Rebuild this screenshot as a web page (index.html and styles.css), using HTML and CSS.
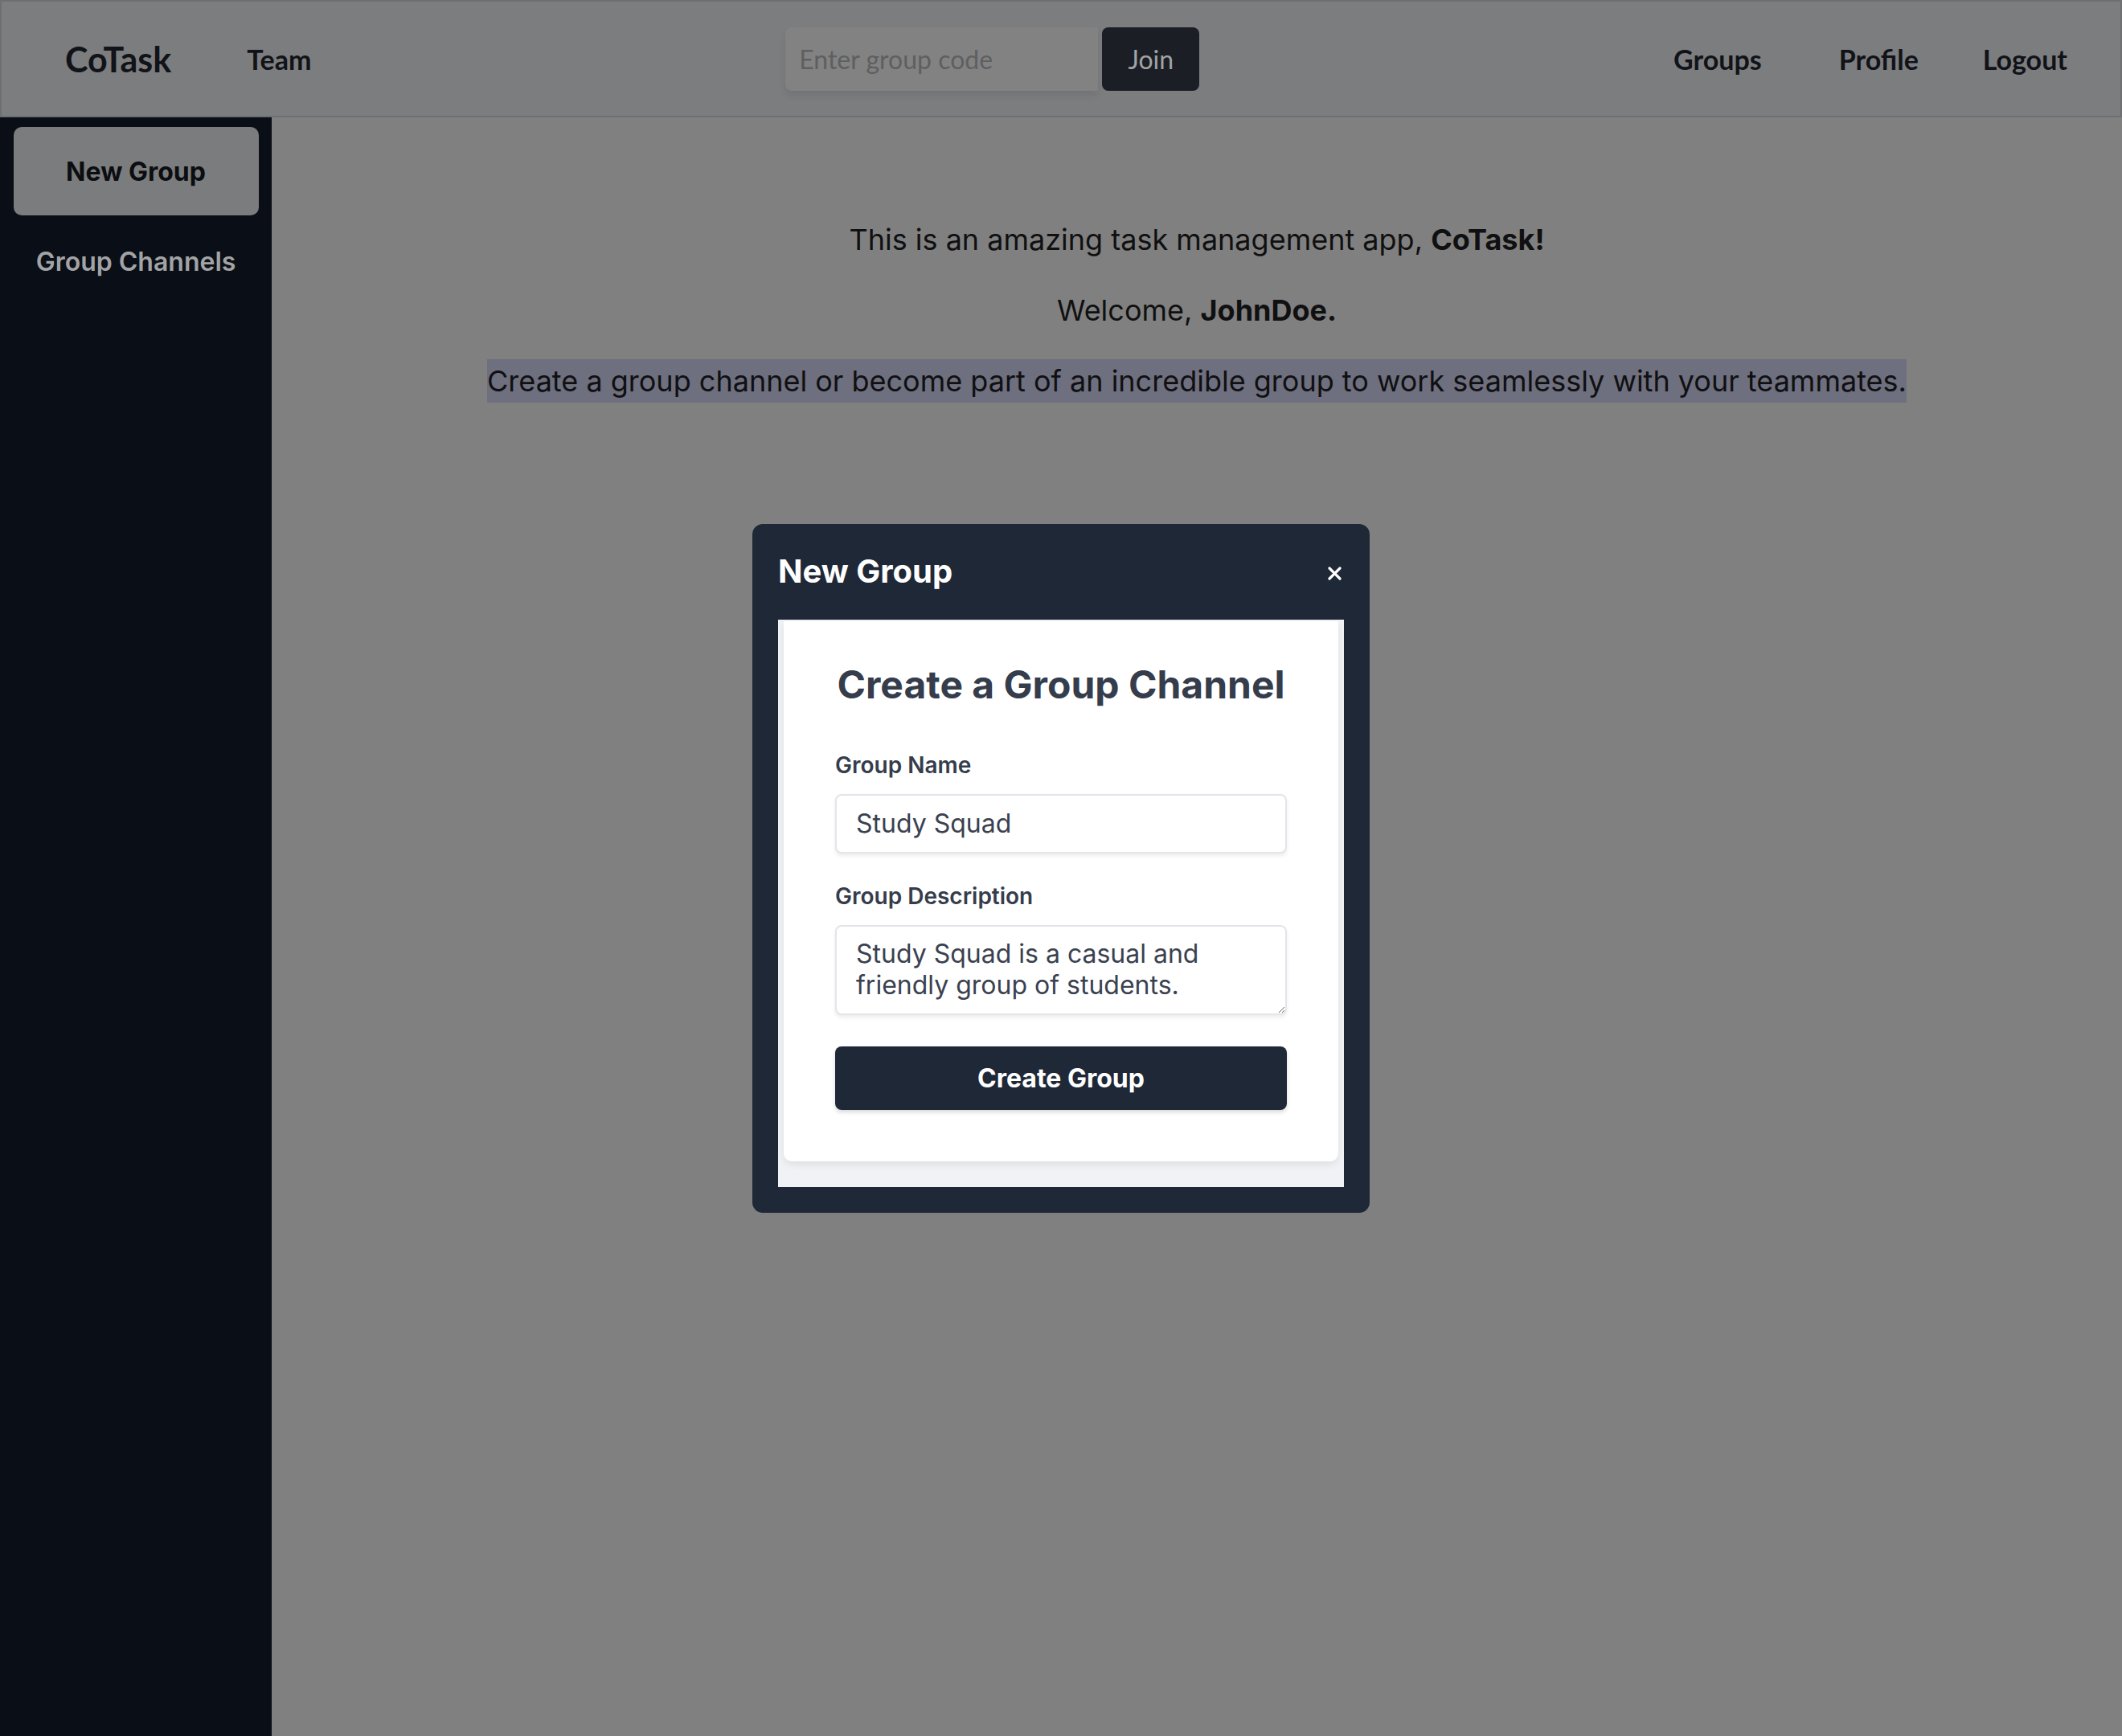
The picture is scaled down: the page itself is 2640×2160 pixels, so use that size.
FILE: index.html
```html
<!DOCTYPE html>
<html lang="en">
<head>
<meta charset="utf-8">
<title>CoTask</title>
<link rel="stylesheet" href="styles.css">
</head>
<body>
<header class="navbar">
  <div class="nav-left">
    <a class="brand" href="#">CoTask</a>
    <a class="nav-link" href="#">Team</a>
  </div>
  <form class="join-form">
    <input class="join-input" type="text" placeholder="Enter group code">
    <button class="join-btn" type="button">Join</button>
  </form>
  <nav class="nav-right">
    <a class="nav-link nav-groups" href="#">Groups</a>
    <a class="nav-link" href="#">Profile</a>
    <a class="nav-link" href="#">Logout</a>
  </nav>
</header>
<div class="layout">
  <aside class="sidebar">
    <button class="new-group-btn" type="button">New Group</button>
    <a class="side-link" href="#">Group Channels</a>
  </aside>
  <main class="main">
    <p class="intro">This is an amazing task management app, <strong>CoTask!</strong></p>
    <p class="intro">Welcome, <strong>JohnDoe.</strong></p>
    <p class="intro highlight">Create a group channel or become part of an incredible group to work seamlessly with your teammates.</p>
  </main>
</div>
<div class="modal-backdrop">
  <div class="modal">
    <div class="modal-header">
      <h2 class="modal-title">New Group</h2>
      <button class="close-btn" type="button" aria-label="Close">
        <svg width="17" height="17" viewBox="0 0 17 17"><path d="M2 2 L15 15 M15 2 L2 15" stroke="#ffffff" stroke-width="3.2" stroke-linecap="round"/></svg>
      </button>
    </div>
    <div class="modal-body">
      <form class="card">
        <h1 class="card-title">Create a Group Channel</h1>
        <label class="field-label" for="gname">Group Name</label>
        <input class="field-input" id="gname" type="text" value="Study Squad">
        <label class="field-label label-gap" for="gdesc">Group Description</label>
        <textarea class="field-textarea" id="gdesc">Study Squad is a casual and friendly group of students.</textarea>
        <button class="create-btn" type="button">Create Group</button>
      </form>
    </div>
  </div>
</div>
</body>
</html>
```

FILE: styles.css
```css
html, body {
  margin: 0;
  padding: 0;
}
body {
  width: 2640px;
  height: 2160px;
  overflow: hidden;
  background: #808080;
  font-family: Inter, "Noto Sans", sans-serif;
  color: #101011;
}
a {
  text-decoration: none;
  color: inherit;
}

/* navbar */
.navbar {
  box-sizing: border-box;
  height: 146px;
  display: flex;
  align-items: center;
  justify-content: space-between;
  padding: 0 66px 0 79px;
  background: #7c7d7f;
  border: 2px solid #6e6f71;
  font-family: Lato, "Open Sans", sans-serif;
  color: #111318;
}
.nav-left {
  display: flex;
  align-items: center;
  gap: 94px;
}
.brand {
  font-size: 43px;
  font-weight: 700;
}
.nav-link {
  font-size: 34px;
  font-weight: 700;
}
.nav-right {
  display: flex;
  align-items: center;
  gap: 80px;
}
.nav-groups {
  margin-right: 16px;
}
.join-form {
  display: flex;
  align-items: center;
  gap: 5px;
  margin: 0;
}
.join-input {
  box-sizing: border-box;
  width: 389px;
  height: 79px;
  padding: 0 17px;
  border: none;
  border-radius: 8px 0 0 8px;
  background: #828283;
  box-shadow: 0 6px 10px rgba(0, 0, 0, 0.08);
  font-family: Lato, "Open Sans", sans-serif;
  font-size: 32px;
  color: #333;
  outline: none;
}
.join-input::placeholder {
  color: #5e5f60;
}
.join-btn {
  box-sizing: border-box;
  width: 121px;
  height: 79px;
  border: none;
  border-radius: 8px;
  background: #1b1e25;
  color: #a2a3a5;
  font-family: Lato, "Open Sans", sans-serif;
  font-size: 32px;
  cursor: pointer;
}

/* layout */
.layout {
  display: flex;
  height: 2014px;
}
.sidebar {
  width: 338px;
  flex-shrink: 0;
  background: #0a0e16;
  display: flex;
  flex-direction: column;
  align-items: center;
  padding-top: 12px;
  box-sizing: border-box;
}
.new-group-btn {
  width: 305px;
  height: 110px;
  border: none;
  border-radius: 10px;
  background: #7b7c7e;
  color: #0b0d10;
  font-family: Inter, sans-serif;
  font-size: 32px;
  font-weight: 700;
  cursor: pointer;
}
.side-link {
  margin-top: 38px;
  font-size: 32px;
  font-weight: 600;
  color: #a2a3a5;
}

.main {
  flex: 1;
  padding-top: 125px;
  text-align: center;
}
.intro {
  margin: 0;
  font-size: 36px;
  line-height: 54px;
}
.intro + .intro {
  margin-top: 34px;
}
.intro strong {
  font-weight: 700;
}
.highlight {
  width: fit-content;
  margin-left: auto;
  margin-right: auto;
  background: #6e6f7f;
}

/* modal */
.modal-backdrop {
  position: fixed;
  inset: 0;
  display: flex;
  align-items: center;
  justify-content: center;
}
.modal {
  box-sizing: border-box;
  width: 768px;
  padding: 32px;
  background: #1f2837;
  border-radius: 13px;
}
.modal-header {
  display: flex;
  align-items: center;
  justify-content: space-between;
  height: 54px;
  margin-bottom: 33px;
}
.modal-title {
  margin: 0;
  font-size: 40px;
  font-weight: 700;
  color: #ffffff;
}
.close-btn {
  display: flex;
  padding: 0;
  margin: 6px 3px 0 0;
  border: none;
  background: none;
  cursor: pointer;
}
.modal-body {
  background: #f0f2f5;
  padding: 2px 7px 32px;
}
.card {
  display: flex;
  flex-direction: column;
  background: #ffffff;
  border-radius: 0 0 10px 10px;
  padding: 49px 64px 64px;
  box-shadow: 0 4px 10px rgba(0, 0, 0, 0.08);
}
.card-title {
  margin: 0 0 49px;
  font-size: 48px;
  line-height: 60px;
  font-weight: 700;
  color: #353d4c;
  text-align: center;
}
.field-label {
  font-size: 28px;
  line-height: 40px;
  font-weight: 600;
  color: #353d4c;
  margin-top: 1px;
  margin-bottom: 16px;
}
.label-gap {
  margin-top: 33px;
}
.field-input,
.field-textarea {
  box-sizing: border-box;
  width: 100%;
  border: 2px solid #e2e5e9;
  border-radius: 8px;
  padding: 0 24px;
  font-family: Inter, sans-serif;
  font-size: 32px;
  color: #3a4150;
  background: #ffffff;
  box-shadow: 0 3px 5px rgba(0, 0, 0, 0.08);
  outline: none;
}
.field-input {
  height: 74px;
}
.field-textarea {
  display: block;
  height: 112px;
  padding-top: 14px;
  padding-bottom: 14px;
  line-height: 39px;
  resize: vertical;
}
.create-btn {
  margin-top: 39px;
  height: 79px;
  border: none;
  border-radius: 8px;
  background: #1f2837;
  color: #ffffff;
  font-family: Inter, sans-serif;
  font-size: 32px;
  font-weight: 700;
  box-shadow: 0 3px 5px rgba(0, 0, 0, 0.15);
  cursor: pointer;
}
```
